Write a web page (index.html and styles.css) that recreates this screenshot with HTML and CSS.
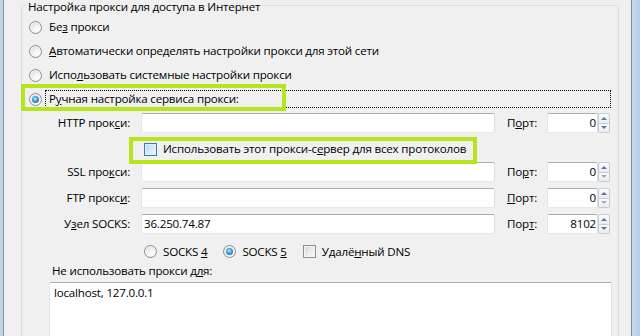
FILE: index.html
```html
<!DOCTYPE html>
<html lang="ru">
<head>
<meta charset="utf-8">
<title>Настройка прокси</title>
<link rel="stylesheet" href="styles.css">
</head>
<body>
<div class="window">
  <div class="frame-left"></div>
  <div class="main">
    <fieldset class="group">
      <legend>Настройка прокси для доступа в Интернет</legend>
      <div class="group-body">
        <div class="opt"><span class="radio"></span><span class="lbl">Бе<u>з</u> прокси</span></div>
        <div class="opt"><span class="radio"></span><span class="lbl"><u>А</u>втоматически определять настройки прокси для этой сети</span></div>
        <div class="opt"><span class="radio"></span><span class="lbl">Испо<u>л</u>ьзовать системные настройки прокси</span></div>
        <div class="opt"><span class="radio on"></span><span class="lbl focus">Р<u>у</u>чная настройка сервиса прокси:</span></div>

        <div class="manual">
          <span class="flabel">HTTP прок<u>с</u>и:</span>
          <span class="input"></span>
          <span class="plabel">П<u>о</u>рт:</span>
          <span class="port"><span class="pinput">0</span><span class="spin"><span class="sb up"></span><span class="sb down"></span></span></span>

          <div class="allproto"><span class="check focus"></span><span class="ctext">Использовать этот прокси-с<u>е</u>рвер для всех протоколов</span></div>

          <span class="flabel">SSL про<u>к</u>си:</span>
          <span class="input"></span>
          <span class="plabel">По<u>р</u>т:</span>
          <span class="port"><span class="pinput">0</span><span class="spin"><span class="sb up"></span><span class="sb down off"></span></span></span>

          <span class="flabel">FTP прокс<u>и</u>:</span>
          <span class="input"></span>
          <span class="plabel"><u>П</u>орт:</span>
          <span class="port"><span class="pinput">0</span><span class="spin"><span class="sb up"></span><span class="sb down off"></span></span></span>

          <span class="flabel">У<u>з</u>ел SOCKS:</span>
          <span class="input">36.250.74.87</span>
          <span class="plabel">Пор<u>т</u>:</span>
          <span class="port"><span class="pinput">8102</span><span class="spin"><span class="sb up"></span><span class="sb down"></span></span></span>

          <div class="socks">
            <span class="item"><span class="radio"></span><span class="stext">SOCKS <u>4</u></span></span>
            <span class="item"><span class="radio on"></span><span class="stext">SOCKS <u>5</u></span></span>
            <span class="item"><span class="check"></span><span class="stext">Удалё<u>н</u>ный DNS</span></span>
          </div>
        </div>

        <div class="noproxy">
          <div class="np-label">Не использовать прокси д<u>л</u>я:</div>
          <div class="textarea">localhost, 127.0.0.1</div>
        </div>
      </div>
    </fieldset>
  </div>
  <div class="frame-right"></div>
</div>
<div class="mark mark1"></div>
<div class="mark mark2"></div>
</body>
</html>
```
FILE: styles.css
```css
html, body {
  margin: 0;
  padding: 0;
}
body {
  width: 640px;
  height: 336px;
  overflow: hidden;
  background: #f0f0f0;
  font-family: "Open Sans", "Noto Sans", "DejaVu Sans", sans-serif;
  font-size: 11.6px;
  letter-spacing: -0.2px;
  color: #000;
  position: relative;
}
u {
  text-decoration: underline;
  text-underline-offset: 1px;
}
.window {
  display: flex;
  height: 336px;
}
.frame-left {
  flex: none;
  width: 3px;
  background: #c3d2e3;
  border-right: 1px solid #8493a4;
}
.main {
  flex: 1;
  padding-left: 17px;
}
.frame-right {
  flex: none;
  width: 8px;
  background: linear-gradient(90deg, #c9d9ec, #b7cde6);
  border-left: 1px solid #7b8b9d;
}
.group {
  box-sizing: border-box;
  width: 598px;
  height: 420px;
  margin: 0;
  padding: 0;
  border: 1px solid #d5dfe5;
  border-radius: 3px;
  min-inline-size: 0;
}
.group legend {
  margin-left: 4px;
  padding: 0 2px;
  line-height: 13px;
  height: 11px;
}
.group-body {
  padding: 4px 7px 0 7px;
}
.opt {
  display: flex;
  align-items: center;
  height: 24px;
}
.radio {
  flex: none;
  box-sizing: border-box;
  width: 13px;
  height: 13px;
  border-radius: 50%;
  border: 1px solid #8c8c8c;
  background: radial-gradient(circle at 65% 70%, #ffffff 0%, #f1f1f1 40%, #d4d4d4 100%);
  box-shadow: inset 0 0 0 1px #f6f6f6;
  display: flex;
  align-items: center;
  justify-content: center;
  margin-right: 3px;
}
.radio.on::after {
  content: "";
  width: 7px;
  height: 7px;
  border-radius: 50%;
  background: radial-gradient(circle at 45% 40%, #b8ecff 0%, #3f9fd9 45%, #104d86 100%);
}
.lbl {
  border: 1px dotted transparent;
  padding: 0 3px;
  line-height: 16px;
  white-space: nowrap;
}
.lbl.focus {
  flex: 1;
  border-color: #000;
}

.manual {
  margin-top: 2px;
  display: grid;
  grid-template-columns: 112px 354px 52px 63px;
  row-gap: 6px;
  align-items: center;
}
.flabel {
  text-align: right;
  padding-right: 11px;
  white-space: nowrap;
  line-height: 16px;
}
.plabel {
  padding-left: 12px;
  line-height: 16px;
}
.input, .pinput {
  box-sizing: border-box;
  height: 20px;
  background: #fff;
  border: 1px solid;
  border-color: #abadb3 #dbdfe6 #e3e9ef #e2e3ea;
  border-radius: 2px;
  line-height: 18px;
  padding: 0 2px;
  white-space: nowrap;
}
.port {
  display: flex;
  height: 20px;
}
.pinput {
  width: 51px;
  text-align: right;
  padding: 0 1px 0 2px;
}
.spin {
  width: 12px;
  display: flex;
  flex-direction: column;
}
.sb {
  flex: 1;
  box-sizing: border-box;
  border: 1px solid #c4ccd6;
  background: linear-gradient(#fbfbfb, #e9ecef);
  display: flex;
  align-items: center;
  justify-content: center;
}
.sb.up {
  border-radius: 2px 2px 0 0;
}
.sb.down {
  border-top: none;
  border-radius: 0 0 2px 2px;
}
.sb.up::after {
  content: "";
  border-left: 3px solid transparent;
  border-right: 3px solid transparent;
  border-bottom: 3px solid #5676a6;
}
.sb.down::after {
  content: "";
  border-left: 3px solid transparent;
  border-right: 3px solid transparent;
  border-top: 3px solid #5676a6;
}
.sb.down.off::after {
  border-top-color: #a7adb5;
}

.allproto {
  grid-column: 2 / 5;
  box-sizing: border-box;
  height: 17px;
  padding: 3px 0 0 3px;
  display: flex;
  align-items: center;
}
.check {
  flex: none;
  box-sizing: border-box;
  width: 13px;
  height: 13px;
  border: 1px solid #8e8f8f;
  background: linear-gradient(135deg, #cfd1d4 0%, #eeeeee 60%, #fbfbfb 100%);
  box-shadow: inset 0 0 0 1px #f4f4f4;
}
.check.focus {
  border-color: #3d7bad;
  background: linear-gradient(135deg, #b4d9f3 0%, #d6ecfb 60%, #eaf6fe 100%);
  box-shadow: inset 0 0 0 1px #def0fc;
}
.ctext {
  margin-left: 6px;
  line-height: 16px;
  white-space: nowrap;
}
.socks {
  grid-column: 2 / 5;
  height: 23px;
  padding-left: 3px;
  display: flex;
  align-items: center;
  gap: 16px;
}
.socks .item {
  display: flex;
  align-items: center;
}
.socks .radio {
  margin-right: 0;
}
.stext {
  margin-left: 6px;
  line-height: 16px;
  white-space: nowrap;
}

.noproxy {
  margin-left: 20px;
}
.np-label {
  padding-left: 3px;
  height: 16px;
  line-height: 16px;
}
.textarea {
  box-sizing: border-box;
  margin-top: 3px;
  width: 563px;
  height: 70px;
  background: #fff;
  border: 1px solid;
  border-color: #abadb3 #dbdfe6 #e3e9ef #e2e3ea;
  border-radius: 2px;
  padding: 3px 4px;
  line-height: 14px;
}

.mark {
  position: absolute;
  box-sizing: border-box;
  border: 4px solid #b5e61d;
}
.mark1 {
  left: 21px;
  top: 84px;
  width: 265px;
  height: 27px;
}
.mark2 {
  left: 129px;
  top: 137px;
  width: 348px;
  height: 27px;
}
```
